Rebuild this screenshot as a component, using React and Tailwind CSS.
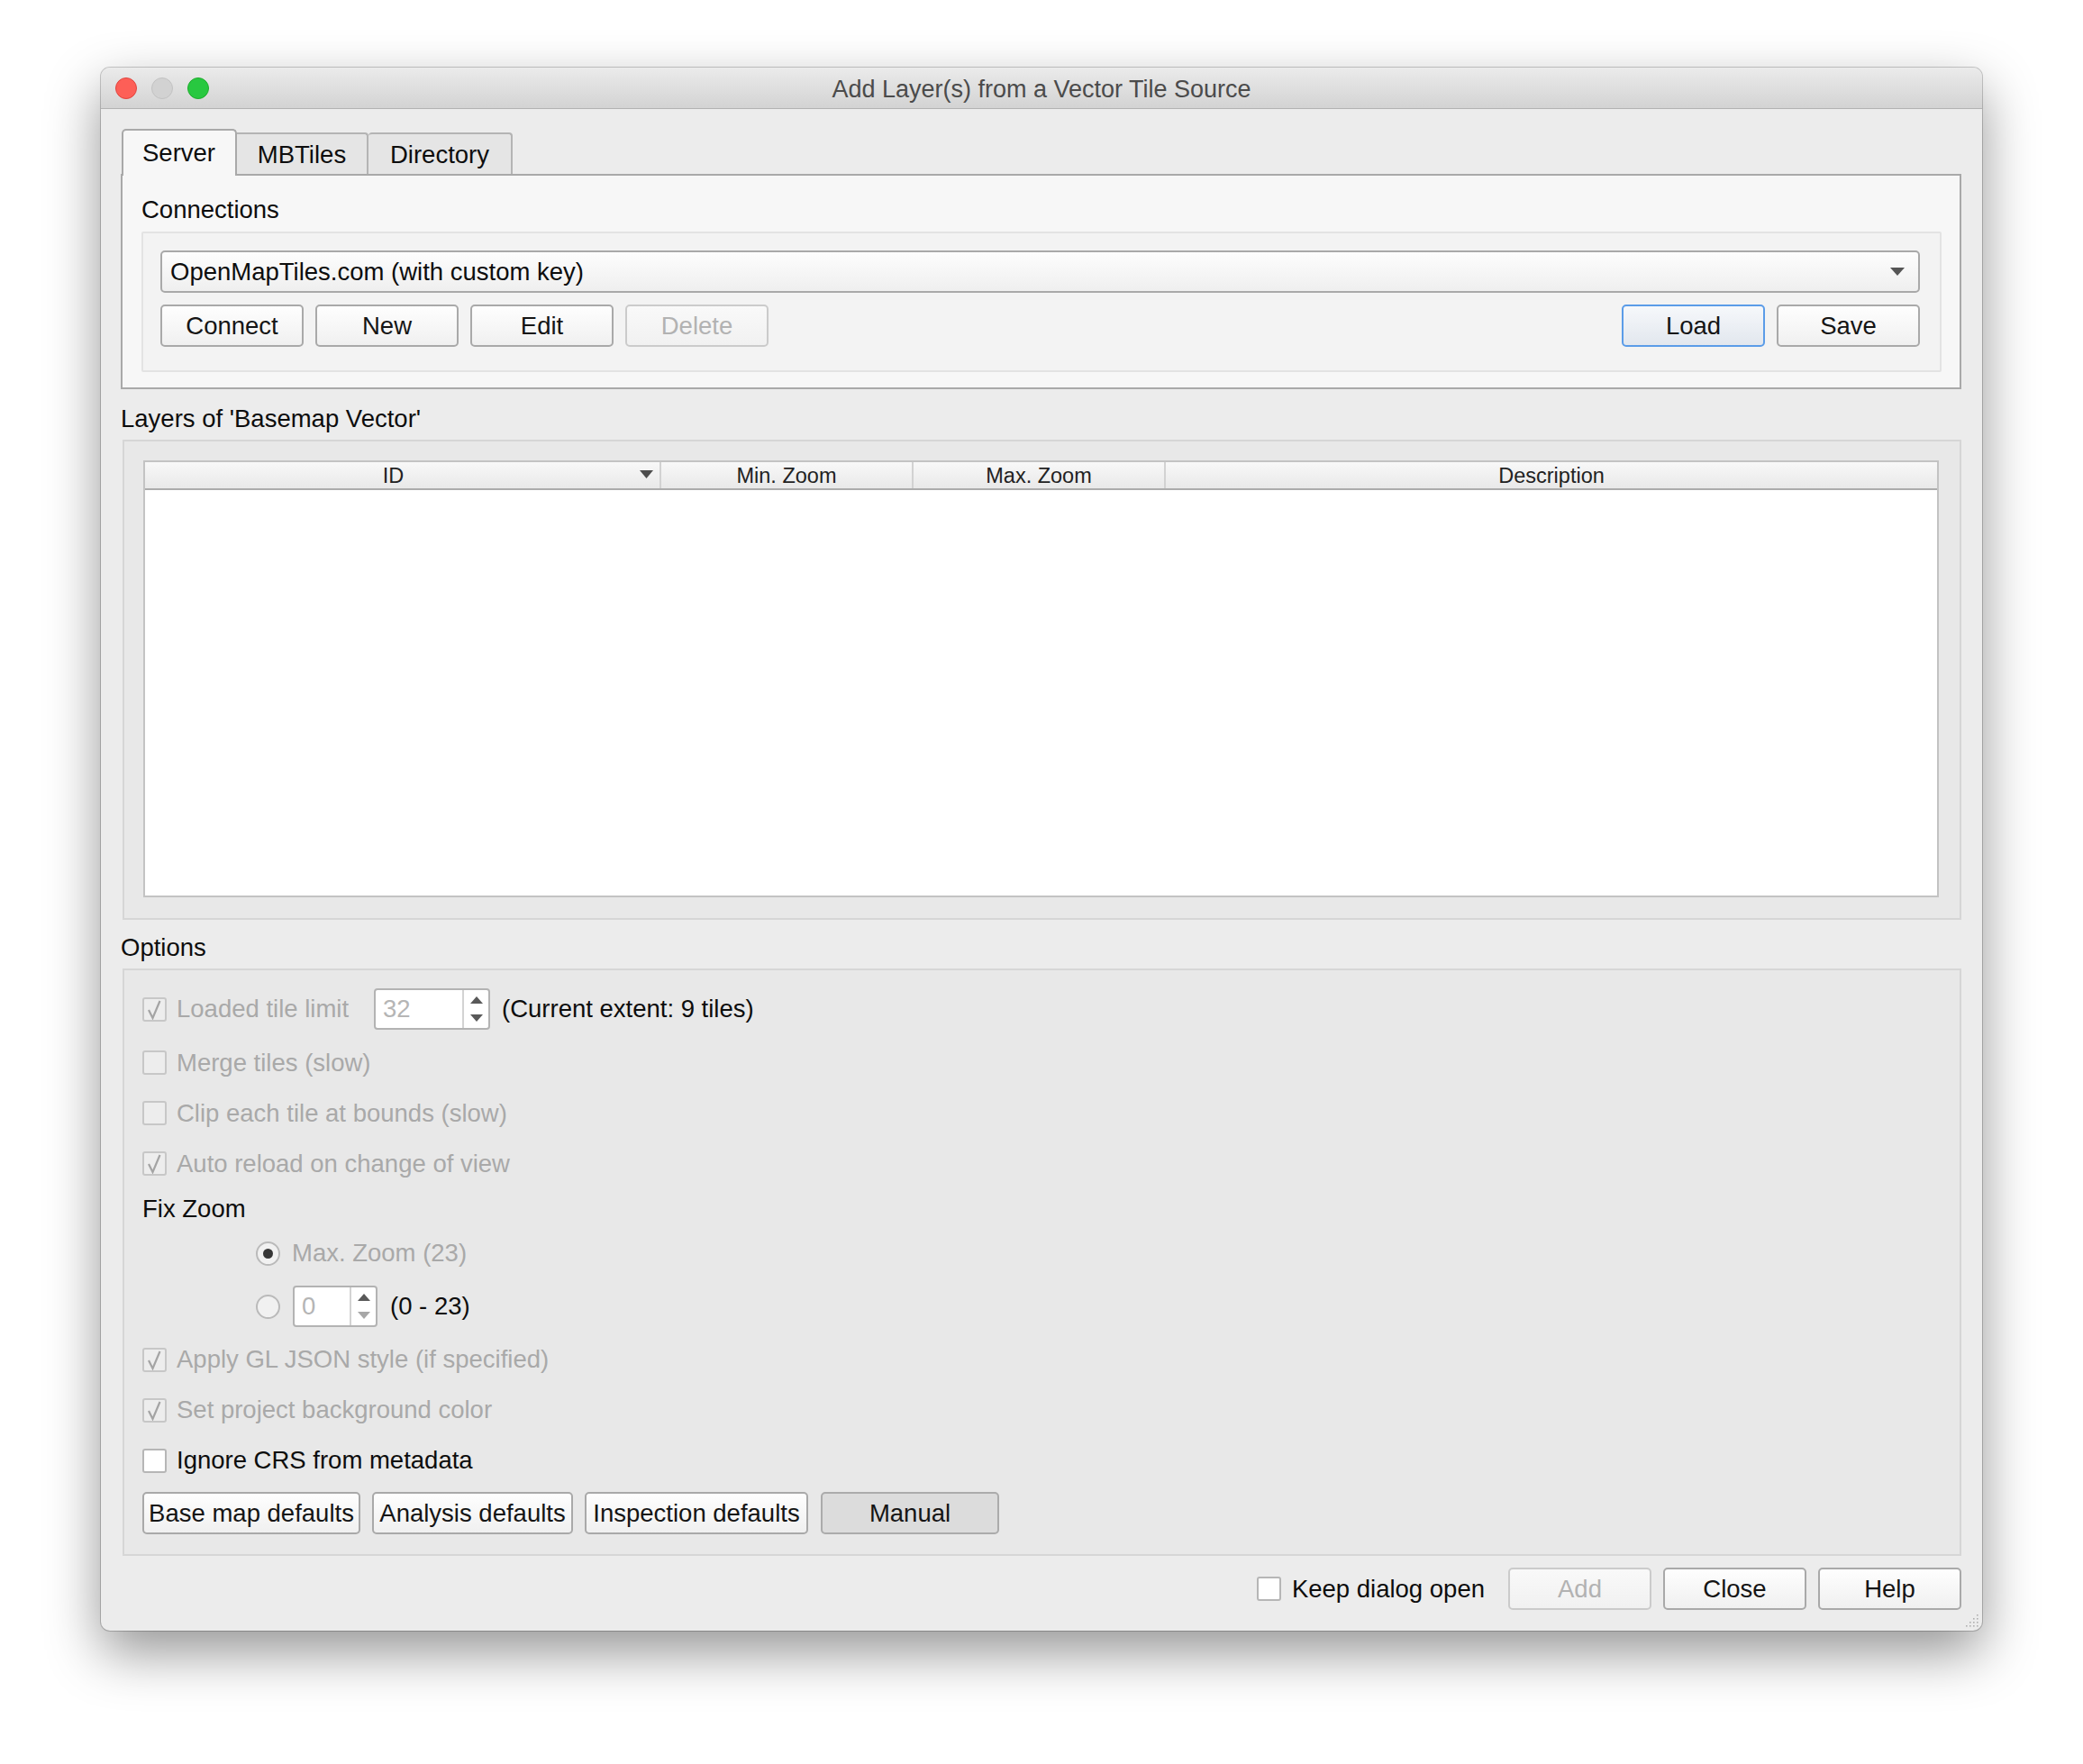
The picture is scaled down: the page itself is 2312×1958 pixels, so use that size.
import React from "react";

function Check({ checked = false, disabled = false }) {
  return (
    <div
      className={
        disabled
          ? "w-[27px] h-[27px] shrink-0 rounded-[3px] border-2 border-[#c7c7c7] bg-[#ededed] flex items-center justify-center"
          : "w-[27px] h-[27px] shrink-0 rounded-[3px] border-2 border-[#b6b6b6] bg-white flex items-center justify-center"
      }
    >
      {checked && (
        <svg width="20" height="23" viewBox="0 0 20 23">
          <polyline points="3,12 7.5,21 15.5,2" fill="none" stroke="#a4a4a4" strokeWidth="2.2" />
        </svg>
      )}
    </div>
  );
}

function Radio({ selected = false }) {
  return (
    <div className="w-[27px] h-[27px] shrink-0 rounded-full border-2 border-[#bababa] bg-[#f1f1f1] flex items-center justify-center">
      {selected && <div className="w-[11px] h-[11px] rounded-full bg-[#363636]" />}
    </div>
  );
}

function Spin({ value, className, downLight = false }) {
  return (
    <div className={"flex h-[46px] rounded-[4px] border-2 border-[#b3b3b3] bg-white overflow-hidden " + className}>
      <div className="flex-1 flex items-center pl-[8px] text-[#b5b5b5]">{value}</div>
      <div className="w-[29px] border-l-2 border-[#d3d3d3] flex flex-col items-center justify-center gap-[12px]">
        <svg width="14" height="8" viewBox="0 0 14 8">
          <polygon points="0,8 14,8 7,0" fill="#595959" />
        </svg>
        <svg width="14" height="8" viewBox="0 0 14 8">
          <polygon points="0,0 14,0 7,8" fill={downLight ? "#a7a7a7" : "#595959"} />
        </svg>
      </div>
    </div>
  );
}

function Btn({ children, className = "", kind = "normal" }) {
  const styles = {
    normal:
      "border-[#a9a9a9] bg-linear-to-b from-[#fefefe] to-[#f0f0f0] text-[#151515]",
    disabled:
      "border-[#cbcbcb] bg-linear-to-b from-[#f9f9f9] to-[#f1f1f1] text-[#b2b2b2]",
    focus:
      "border-[#5b9ce8] bg-linear-to-b from-[#f6f8fb] to-[#e2e7ee] text-[#151515]",
    pressed: "border-[#ababab] bg-[#dcdcdc] text-[#151515]",
  };
  return (
    <div
      className={
        "h-[47px] shrink-0 flex items-center justify-center rounded-[5px] border-2 whitespace-nowrap " +
        styles[kind] +
        " " +
        className
      }
    >
      {children}
    </div>
  );
}

function OptRow({ children, className = "" }) {
  return <div className={"flex items-center h-[40px] " + className}>{children}</div>;
}

export default function App() {
  return (
    <div className="w-[2312px] h-[1958px] bg-white pt-[75px] pl-[112px] font-['Liberation_Sans',Arial,sans-serif] text-[27.5px] leading-[32px] text-[#0d0d0d]">
      <div className="relative w-[2088px] h-[1735px] bg-[#ececec] rounded-[10px] overflow-hidden shadow-[0_24px_60px_rgba(0,0,0,0.42),0_0_0_1px_rgba(0,0,0,0.2)] flex flex-col">
        {/* Title bar */}
        <div className="h-[46px] shrink-0 grid grid-cols-[1fr_auto_1fr] items-center bg-linear-to-b from-[#ebebeb] to-[#d3d3d3] border-b border-[#b2b2b2]">
          <div className="flex items-center gap-[16px] pl-[16px]">
            <div className="w-[24px] h-[24px] rounded-full bg-[#fd5f57] border border-[#e0443e]" />
            <div className="w-[24px] h-[24px] rounded-full bg-[#d2d2d2] border border-[#c2c2c2]" />
            <div className="w-[24px] h-[24px] rounded-full bg-[#28c840] border border-[#1dad2b]" />
          </div>
          <div className="text-[27px] text-[#4b4b4b] pt-[2px]">Add Layer(s) from a Vector Tile Source</div>
          <div />
        </div>

        {/* Body */}
        <div className="flex flex-col pl-[22px] pr-[23px] pt-[22px]">
          {/* Tabs */}
          <div className="flex items-end h-[50px] pl-[1px]">
            <div className="relative z-10 -mb-[2px] h-[52px] w-[128px] flex items-center pl-[21px] pb-[1px] bg-[#f7f7f7] border-2 border-b-0 border-[#a9a9a9] rounded-t-[5px]">
              Server
            </div>
            <div className="h-[46px] w-[146px] flex items-center justify-center pt-[2px] bg-[#e5e5e5] border-2 border-l-0 border-b-0 border-[#b4b4b4] rounded-tr-[4px]">
              MBTiles
            </div>
            <div className="h-[46px] w-[160px] flex items-center justify-center pt-[2px] bg-[#e5e5e5] border-2 border-l-0 border-b-0 border-[#b4b4b4] rounded-t-[4px]">
              Directory
            </div>
          </div>

          {/* Tab pane */}
          <div className="h-[239px] border-2 border-[#a9a9a9] bg-[#f7f7f7] pl-[21px] pr-[20px] pt-[22px]">
            <div className="h-[32px] flex items-center">Connections</div>
            <div className="mt-[8px] h-[156px] border-2 border-[#e3e3e3] bg-[#f3f3f3] rounded-[2px] pl-[19px] pr-[22px] pt-[19px]">
              <div className="h-[47px] flex items-center justify-between rounded-[5px] border-2 border-[#a9a9a9] bg-linear-to-b from-[#fdfdfd] to-[#efefef] pl-[9px] pr-[15px]">
                <span>OpenMapTiles.com (with custom key)</span>
                <svg width="16" height="9" viewBox="0 0 16 9">
                  <polygon points="0,0 16,0 8,9" fill="#555" />
                </svg>
              </div>
              <div className="mt-[13px] flex items-center">
                <div className="flex gap-[13px]">
                  <Btn className="w-[159px]">Connect</Btn>
                  <Btn className="w-[159px]">New</Btn>
                  <Btn className="w-[159px]">Edit</Btn>
                  <Btn className="w-[159px]" kind="disabled">Delete</Btn>
                </div>
                <div className="ml-auto flex gap-[13px]">
                  <Btn className="w-[159px]" kind="focus">Load</Btn>
                  <Btn className="w-[159px]">Save</Btn>
                </div>
              </div>
            </div>
          </div>

          {/* Layers */}
          <div className="mt-[17px] h-[32px] flex items-center">Layers of 'Basemap Vector'</div>
          <div className="mt-[7px] ml-[2px] h-[533px] border-2 border-[#d6d6d6] bg-[#e8e8e8] pl-[21px] pr-[23px] pt-[21px] pb-[23px]">
            <div className="h-full border-2 border-[#c3c3c3] bg-white flex flex-col">
              <div className="h-[31px] shrink-0 flex border-b-2 border-[#acacac] bg-linear-to-b from-[#f8f8f8] to-[#e9e9e9] text-[23.5px] text-[#222]">
                <div className="relative w-[573px] flex items-center justify-center pr-[20px] border-r-2 border-[#d2d2d2]">
                  ID
                  <svg className="absolute right-[7px] top-[9px]" width="15" height="9" viewBox="0 0 15 9">
                    <polygon points="0,0 15,0 7.5,9" fill="#4d4d4d" />
                  </svg>
                </div>
                <div className="w-[280px] flex items-center justify-center border-r-2 border-[#d2d2d2]">Min. Zoom</div>
                <div className="w-[280px] flex items-center justify-center border-r-2 border-[#d2d2d2]">Max. Zoom</div>
                <div className="flex-1 flex items-center justify-center">Description</div>
              </div>
              <div className="flex-1" />
            </div>
          </div>

          {/* Options */}
          <div className="mt-[15px] h-[32px] flex items-center">Options</div>
          <div className="mt-[7px] ml-[2px] h-[652px] border-2 border-[#d6d6d6] bg-[#e8e8e8] pl-[20px] pt-[20px] pb-[22px] flex flex-col">
            <div className="flex items-center h-[46px]">
              <div className="w-[257px] flex items-center gap-[11px]">
                <Check checked disabled />
                <span className="text-[#a9a9a9]">Loaded tile limit</span>
              </div>
              <Spin value="32" className="w-[129px]" />
              <span className="ml-[13px]">(Current extent: 9 tiles)</span>
            </div>
            <OptRow className="mt-[17px] gap-[11px]">
              <Check disabled />
              <span className="text-[#a9a9a9]">Merge tiles (slow)</span>
            </OptRow>
            <OptRow className="mt-[16px] gap-[11px]">
              <Check disabled />
              <span className="text-[#a9a9a9]">Clip each tile at bounds (slow)</span>
            </OptRow>
            <OptRow className="mt-[16px] gap-[11px]">
              <Check checked disabled />
              <span className="text-[#a9a9a9]">Auto reload on change of view</span>
            </OptRow>
            <OptRow className="mt-[10px]">
              <span>Fix Zoom</span>
            </OptRow>
            <OptRow className="mt-[10px] pl-[126px] gap-[13px]">
              <Radio selected />
              <span className="text-[#a9a9a9]">Max. Zoom (23)</span>
            </OptRow>
            <div className="mt-[16px] h-[46px] flex items-center pl-[126px]">
              <Radio />
              <Spin value="0" className="ml-[14px] w-[94px]" downLight />
              <span className="ml-[14px]">(0 - 23)</span>
            </div>
            <OptRow className="mt-[16px] gap-[11px]">
              <Check checked disabled />
              <span className="text-[#a9a9a9]">Apply GL JSON style (if specified)</span>
            </OptRow>
            <OptRow className="mt-[16px] gap-[11px]">
              <Check checked disabled />
              <span className="text-[#a9a9a9]">Set project background color</span>
            </OptRow>
            <OptRow className="mt-[16px] gap-[11px]">
              <Check />
              <span>Ignore CRS from metadata</span>
            </OptRow>
            <div className="mt-[15px] flex items-center">
              <Btn className="w-[242px]">Base map defaults</Btn>
              <Btn className="ml-[13px] w-[223px]">Analysis defaults</Btn>
              <Btn className="ml-[13px] w-[248px]">Inspection defaults</Btn>
              <Btn className="ml-[14px] w-[198px]" kind="pressed">Manual</Btn>
            </div>
          </div>

          {/* Footer */}
          <div className="mt-[13px] flex items-center justify-end">
            <div className="flex items-center gap-[12px] mr-[26px]">
              <Check />
              <span>Keep dialog open</span>
            </div>
            <Btn className="w-[159px]" kind="disabled">Add</Btn>
            <Btn className="ml-[13px] w-[159px]">Close</Btn>
            <Btn className="ml-[13px] w-[159px]">Help</Btn>
          </div>
        </div>

        {/* resize grip */}
        <svg className="absolute right-[3px] bottom-[3px]" width="18" height="18" viewBox="0 0 18 18">
          {[
            [15, 3], [15, 7], [11, 7], [15, 11], [11, 11], [7, 11], [15, 15], [11, 15], [7, 15], [3, 15],
          ].map(([x, y], i) => (
            <rect key={i} x={x} y={y} width="1.6" height="1.6" fill="#b0b0b0" />
          ))}
        </svg>
      </div>
    </div>
  );
}
